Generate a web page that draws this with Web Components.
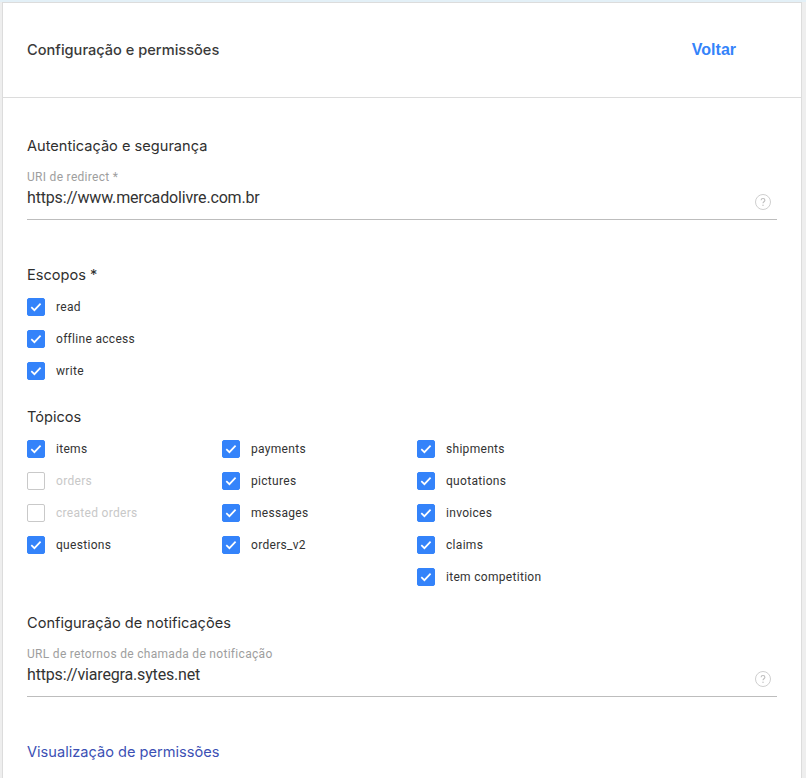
<!DOCTYPE html>
<html lang="pt-BR">
<head>
<meta charset="utf-8">
<title>Configuração e permissões</title>
<style>
  html, body { margin: 0; height: 778px; overflow: hidden; }
  body { background: #eeeeee; font-family: Roboto, "Liberation Sans", sans-serif; color: #333; }
</style>
</head>
<body>
<settings-card>
  <card-header slot="header" link="Voltar">Configuração e permissões</card-header>

  <section-title style="margin-top:38px">Autenticação e segurança</section-title>
  <text-field label="URI de redirect *" value="https://www.mercadolivre.com.br" style="margin-top:13px"></text-field>

  <section-title style="margin-top:45px">Escopos *</section-title>
  <check-grid style="margin-top:6px">
    <check-item checked>read</check-item>
    <check-item checked style="grid-row:2">offline access</check-item>
    <check-item checked style="grid-row:3">write</check-item>
  </check-grid>

  <section-title style="margin-top:20px">Tópicos</section-title>
  <check-grid style="margin-top:6px">
    <check-item checked>items</check-item>
    <check-item checked>payments</check-item>
    <check-item checked>shipments</check-item>
    <check-item disabled>orders</check-item>
    <check-item checked>pictures</check-item>
    <check-item checked>quotations</check-item>
    <check-item disabled>created orders</check-item>
    <check-item checked>messages</check-item>
    <check-item checked>invoices</check-item>
    <check-item checked>questions</check-item>
    <check-item checked>orders_v2</check-item>
    <check-item checked>claims</check-item>
    <check-item checked style="grid-column:3">item competition</check-item>
  </check-grid>

  <section-title style="margin-top:20px">Configuração de notificações</section-title>
  <text-field label="URL de retornos de chamada de notificação" value="https://viaregra.sytes.net" style="margin-top:13px"></text-field>

  <section-title style="margin-top:45px;--title-color:#3b50b4">Visualização de permissões</section-title>
</settings-card>

<script>
class SettingsCard extends HTMLElement {
  constructor() {
    super();
    this.attachShadow({mode: 'open'}).innerHTML = `
      <style>
        :host {
          display: block;
          border-top: 2px solid #e3f0f7;
          height: 776px;
          overflow: hidden;
        }
        .card {
          box-sizing: border-box;
          margin-left: 2px;
          width: 800px;
          height: 776px;
          background: #fff;
          border: 1px solid #dcdcdc;
          border-bottom: 0;
        }
        .body { padding: 0 24px; }
      </style>
      <div class="card">
        <slot name="header"></slot>
        <div class="body"><slot></slot></div>
      </div>
    `;
  }
}

class CardHeader extends HTMLElement {
  constructor() {
    super();
    this.attachShadow({mode: 'open'}).innerHTML = `
      <style>
        :host {
          display: flex;
          align-items: center;
          justify-content: space-between;
          box-sizing: border-box;
          height: 95px;
          padding: 0 65px 0 24px;
          border-bottom: 1px solid #dcdcdc;
        }
        .title { font: 500 14.6px Inter, "Noto Sans", sans-serif; color: #3a3a3a; }
        a { font: 700 16px "Liberation Sans", Arial, sans-serif; color: #3483fa; text-decoration: none; }
      </style>
      <span class="title"><slot></slot></span>
      <a href="#">${this.getAttribute('link')}</a>
    `;
  }
}

class SectionTitle extends HTMLElement {
  constructor() {
    super();
    this.attachShadow({mode: 'open'}).innerHTML = `
      <style>
        :host {
          display: block;
          font: 400 14.6px/20px Inter, "Noto Sans", sans-serif;
          color: var(--title-color, #2f2f2f);
        }
      </style>
      <slot></slot>
    `;
  }
}

class TextField extends HTMLElement {
  constructor() {
    super();
    this.attachShadow({mode: 'open'}).innerHTML = `
      <style>
        :host {
          display: block;
          position: relative;
          box-sizing: border-box;
          height: 51px;
          border-bottom: 1px solid #bdbdbd;
        }
        .label { display: block; font: 400 12px/16px Roboto, sans-serif; letter-spacing: .3px; color: #9e9e9e; }
        .value { display: block; margin-top: 1px; font: 400 16px/24px Roboto, sans-serif; letter-spacing: -.17px; color: #333; }
        svg { position: absolute; right: 6px; top: 25px; }
      </style>
      <span class="label">${this.getAttribute('label')}</span>
      <span class="value">${this.getAttribute('value')}</span>
      <svg width="16" height="16" viewBox="0 0 16 16" fill="none">
        <circle cx="8" cy="8" r="7.5" stroke="#cfcfcf"/>
        <path d="M6.1 6.3c0-1.1.9-1.8 1.9-1.8s1.9.7 1.9 1.7c0 1.5-1.9 1.5-1.9 3" stroke="#bdbdbd" stroke-width="1.1"/>
        <circle cx="8" cy="11.2" r=".7" fill="#bdbdbd"/>
      </svg>
    `;
  }
}

class CheckGrid extends HTMLElement {
  constructor() {
    super();
    this.attachShadow({mode: 'open'}).innerHTML = `
      <style>
        :host {
          display: grid;
          grid-template-columns: repeat(3, 195px);
          grid-auto-rows: 32px;
        }
      </style>
      <slot></slot>
    `;
  }
}

class CheckItem extends HTMLElement {
  constructor() {
    super();
    const checked = this.hasAttribute('checked');
    this.attachShadow({mode: 'open'}).innerHTML = `
      <style>
        :host {
          display: flex;
          align-items: center;
          gap: 11px;
          font: 400 12px Roboto, sans-serif;
          letter-spacing: .3px;
          color: #333;
        }
        :host([disabled]) { color: #c8c8c8; }
        .box {
          box-sizing: border-box;
          width: 18px;
          height: 18px;
          border-radius: 2px;
          border: 1px solid #c9c9c9;
          background: #fff;
          display: flex;
          align-items: center;
          justify-content: center;
        }
        .box.on { background: #3483fa; border-color: #3483fa; }
      </style>
      <span class="box ${checked ? 'on' : ''}">
        ${checked ? '<svg width="12" height="10" viewBox="0 0 12 10" fill="none"><path d="M1.3 5.2 4.4 8.2 10.6 1.6" stroke="#fff" stroke-width="1.7"/></svg>' : ''}
      </span>
      <span><slot></slot></span>
    `;
  }
}

customElements.define('settings-card', SettingsCard);
customElements.define('card-header', CardHeader);
customElements.define('section-title', SectionTitle);
customElements.define('text-field', TextField);
customElements.define('check-grid', CheckGrid);
customElements.define('check-item', CheckItem);
</script>
</body>
</html>
